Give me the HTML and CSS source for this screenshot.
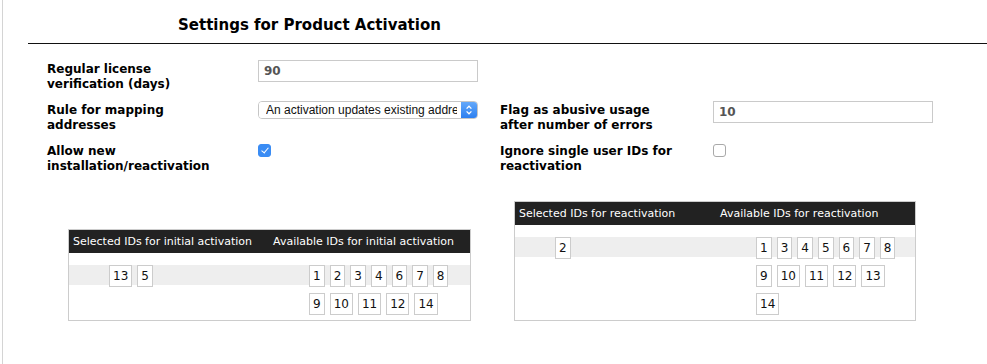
FILE: index.html
```html
<!DOCTYPE html>
<html lang="en">
<head>
    <meta charset="UTF-8">
    <title>Settings for Product Activation</title>
    <link rel="stylesheet" href="styles.css">
</head>
<body>

<div class="page">
    <h2 class="title">Settings for Product Activation</h2>

    <div class="settings">
        <label class="label left-label">Regular license<br>verification (days)</label>
        <input class="text-input left-control" type="text" value="90">

        <label class="label left-label">Rule for mapping<br>addresses</label>
        <div class="select-box left-control">
            <select>
                <option>An activation updates existing addresses</option>
                <option>An activation adds a new address</option>
            </select>
            <span class="select-arrow">
                <svg width="8" height="12" viewBox="0 0 8 12"><path d="M1.6 4.6 L4 2.2 L6.4 4.6 M1.6 7.4 L4 9.8 L6.4 7.4" fill="none" stroke="#fff" stroke-width="1.3"/></svg>
            </span>
        </div>
        <label class="label right-label">Flag as abusive usage<br>after number of errors</label>
        <input class="text-input right-control" type="text" value="10">

        <label class="label left-label">Allow new<br>installation/reactivation</label>
        <div class="left-control"><input class="check" type="checkbox" checked></div>
        <label class="label right-label">Ignore single user IDs for<br>reactivation</label>
        <div class="right-control"><input class="check" type="checkbox"></div>
    </div>

    <div class="lists">
        <table class="id-table initial-table">
            <thead>
                <tr>
                    <th>Selected IDs for initial activation</th>
                    <th>Available IDs for initial activation</th>
                </tr>
            </thead>
            <tbody>
                <tr>
                    <td>
                        <ul class="chips">
                            <li class="chip">13</li>
                            <li class="chip">5</li>
                        </ul>
                    </td>
                    <td>
                        <ul class="chips">
                            <li class="chip">1</li>
                            <li class="chip">2</li>
                            <li class="chip">3</li>
                            <li class="chip">4</li>
                            <li class="chip">6</li>
                            <li class="chip">7</li>
                            <li class="chip">8</li>
                            <li class="chip">9</li>
                            <li class="chip">10</li>
                            <li class="chip">11</li>
                            <li class="chip">12</li>
                            <li class="chip">14</li>
                        </ul>
                    </td>
                </tr>
            </tbody>
        </table>

        <table class="id-table reactivation-table">
            <thead>
                <tr>
                    <th>Selected IDs for reactivation</th>
                    <th>Available IDs for reactivation</th>
                </tr>
            </thead>
            <tbody>
                <tr>
                    <td>
                        <ul class="chips">
                            <li class="chip">2</li>
                        </ul>
                    </td>
                    <td>
                        <ul class="chips">
                            <li class="chip">1</li>
                            <li class="chip">3</li>
                            <li class="chip">4</li>
                            <li class="chip">5</li>
                            <li class="chip">6</li>
                            <li class="chip">7</li>
                            <li class="chip">8</li>
                            <li class="chip">9</li>
                            <li class="chip">10</li>
                            <li class="chip">11</li>
                            <li class="chip">12</li>
                            <li class="chip">13</li>
                            <li class="chip">14</li>
                        </ul>
                    </td>
                </tr>
            </tbody>
        </table>
    </div>
</div>

</body>
</html>
```

FILE: styles.css
```css
body {
    margin: 0;
    font-family: "DejaVu Sans", Verdana, sans-serif;
    color: #000;
    background-color: #fff;
}

.page {
    margin-left: 2px;
    border-left: 1px solid #d4d4d4;
    min-height: 100vh;
}

.title {
    margin: 0 0 0 25px;
    padding: 16px 0 9px 150px;
    font-size: 15px;
    line-height: 18px;
    font-weight: bold;
    border-bottom: 1px solid #111;
}

.settings {
    display: grid;
    grid-template-columns: 211px 220px 22px 213px 220px;
    row-gap: 9px;
    align-items: start;
    padding: 16px 0 0 44px;
}

.label {
    font-size: 12px;
    line-height: 15px;
    font-weight: bold;
    padding-top: 2px;
}

.left-label {
    grid-column: 1;
}

.left-control {
    grid-column: 2;
}

.right-label {
    grid-column: 4;
}

.right-control {
    grid-column: 5;
}

.text-input {
    box-sizing: border-box;
    width: 220px;
    height: 22px;
    margin: 0;
    padding: 0 5px;
    border: 1px solid #cacaca;
    font-family: "DejaVu Sans", Verdana, sans-serif;
    font-size: 12px;
    font-weight: bold;
    color: #555;
    outline: none;
}

.select-box {
    box-sizing: border-box;
    display: flex;
    width: 220px;
    height: 18px;
    border: 1px solid #c6c6c6;
    border-radius: 4px;
    overflow: hidden;
    background-color: #fff;
}

.select-box select {
    appearance: none;
    -webkit-appearance: none;
    flex: 1;
    min-width: 0;
    height: 100%;
    margin: 0;
    padding: 0 4px 0 7px;
    border: none;
    background-color: #fff;
    font-family: "Liberation Sans", Arial, sans-serif;
    font-size: 12px;
    color: #111;
    outline: none;
}

.select-arrow {
    display: flex;
    align-items: center;
    justify-content: center;
    width: 16px;
    background: linear-gradient(#63a8fa, #2c7ff0);
}

.check {
    appearance: none;
    -webkit-appearance: none;
    position: relative;
    box-sizing: border-box;
    width: 13px;
    height: 13px;
    margin: 1px 0 0;
    border: 1px solid #a9a9a9;
    border-radius: 3px;
    background-color: #fff;
}

.check:checked {
    border-color: #3a8cf4;
    background-color: #3a8cf4;
}

.check:checked::after {
    content: "";
    position: absolute;
    left: 3.5px;
    top: 1px;
    width: 3px;
    height: 6px;
    border: solid #fff;
    border-width: 0 1.6px 1.6px 0;
    transform: rotate(40deg);
}

.lists {
    display: flex;
    align-items: flex-end;
    gap: 43px;
    margin: 27px 0 0 65px;
}

.id-table {
    border: 1px solid #cccccc;
    border-spacing: 0;
    table-layout: fixed;
}

.id-table th {
    box-sizing: border-box;
    height: 23px;
    padding: 0 4px;
    background-color: #222;
    color: #fff;
    font-size: 11px;
    font-weight: normal;
    text-align: left;
    white-space: nowrap;
}

.initial-table th:first-child { width: 200px; }
.initial-table th:last-child { width: 201px; }
.reactivation-table th:first-child { width: 201px; }
.reactivation-table th:last-child { width: 199px; }

.id-table td {
    padding: 12px 0 5px;
    vertical-align: top;
    background: linear-gradient(#fff 12px, #eeeeee 12px, #eeeeee 32px, #fff 32px);
}

.chips {
    display: flex;
    flex-wrap: wrap;
    gap: 6px 5px;
    width: 150px;
    margin: 0;
    padding: 0 0 0 40px;
    list-style: none;
}

.chip {
    box-sizing: border-box;
    height: 22px;
    padding: 0 3px;
    border: 1px solid #cccccc;
    background-color: #fff;
    font-size: 12px;
    line-height: 20px;
    color: #111;
}
```
